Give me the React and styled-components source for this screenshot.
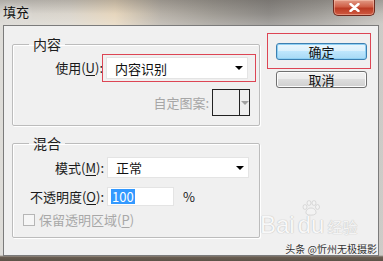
import styled, { createGlobalStyle } from "styled-components";

const GlobalStyle = createGlobalStyle`
  html, body {
    margin: 0;
    padding: 0;
  }
  body {
    font-family: "Noto Sans CJK SC", "Noto Sans", sans-serif;
    font-size: 13px;
    color: #1a1a1a;
    background: #8d8a84;
  }
`;

const Window = styled.div`
  width: 383px;
  height: 261px;
  display: flex;
  flex-direction: column;
  overflow: hidden;
  background:
    linear-gradient(180deg, rgba(0, 0, 0, 0) 0, rgba(0, 0, 0, 0) 255px, #6a5e52 257px, #5c5247 261px),
    linear-gradient(180deg, rgba(60, 55, 50, 0.25) 0, rgba(255, 255, 255, 0) 14px, rgba(255, 255, 255, 0.2) 24px),
    linear-gradient(90deg, #d6d4cf 0%, #dbd6cd 18%, #e6d6bd 30%, #b7b1a8 42%, #9f9b94 56%, #8e8b87 70%, #a29f9a 84%, #c2bfba 100%);
`;

const TitleBar = styled.div`
  height: 25px;
  flex: none;
  display: flex;
  justify-content: space-between;
  align-items: flex-start;
  padding-left: 3px;
`;

const Title = styled.span`
  font-size: 13px;
  line-height: 24px;
  color: #111;
  text-shadow: 0 0 6px rgba(255, 255, 255, 0.7);
`;

const CloseButton = styled.div`
  width: 42px;
  height: 16px;
  margin-right: 8px;
  box-sizing: border-box;
  border: 1px solid #6e2a1f;
  border-top: none;
  border-radius: 0 0 5px 5px;
  background: linear-gradient(180deg, #e29a86 0%, #cf5f47 45%, #bb3b24 55%, #cf5a41 100%);
  box-shadow: inset 0 0 0 1px rgba(255, 210, 190, 0.45);
  display: flex;
  align-items: center;
  justify-content: center;
`;

const Body = styled.div`
  position: relative;
  flex: 1;
  margin: 0 4px 5px 3px;
  display: flex;
  align-items: flex-start;
  padding: 9px 0 0 8px;
  background: #f0f0f0;
  border: 1px solid #7b7b7b;
`;

const LeftCol = styled.div`
  width: 248px;
  display: flex;
  flex-direction: column;
  gap: 8px;
`;

const Group = styled.fieldset`
  margin: 0;
  padding: ${(p) => p.$top}px 9px ${(p) => p.$bottom}px 0;
  min-width: 0;
  border: 1px solid #bcbcbc;
  border-radius: 2px;
  box-shadow: inset 1px 1px 0 #fff, 1px 1px 0 #fff;
`;

const Legend = styled.legend`
  margin-left: 16px;
  padding: 0 4px;
  font-size: 14px;
  line-height: 18px;
  color: #1e1e1e;
`;

const Row = styled.div`
  display: flex;
  align-items: center;
  justify-content: ${(p) => (p.$end ? "flex-end" : "flex-start")};
  margin-top: ${(p) => p.$gap || 0}px;
  padding-left: ${(p) => p.$indent || 0}px;
`;

const Label = styled.span`
  width: ${(p) => p.$w || 91}px;
  text-align: right;
  margin-right: 3px;
  white-space: nowrap;
  line-height: 18px;
  color: ${(p) => (p.$muted ? "#a6a6a6" : "#1a1a1a")};
`;

const Key = styled.u`
  text-underline-offset: 2px;
`;

const Marked = styled.div`
  position: relative;
  &::after {
    content: "";
    position: absolute;
    top: ${(p) => p.$t}px;
    bottom: ${(p) => p.$b}px;
    left: ${(p) => p.$l}px;
    right: ${(p) => p.$r}px;
    border: 1px solid #dd4554;
    pointer-events: none;
  }
`;

const Select = styled.div`
  width: 142px;
  height: ${(p) => p.$h}px;
  box-sizing: border-box;
  display: flex;
  align-items: center;
  justify-content: space-between;
  padding: 0 4px 0 8px;
  background: #fff;
  border: 1px solid #e4e4e4;
  font-size: 13px;
  color: #111;
`;

const Arrow = styled.span`
  width: 0;
  height: 0;
  border-left: 4px solid transparent;
  border-right: 4px solid transparent;
  border-top: 4px solid ${(p) => p.$color || "#000"};
`;

const PatternBox = styled.div`
  width: 38px;
  height: 27px;
  box-sizing: border-box;
  display: grid;
  grid-template-columns: 1fr 10px;
  border: 1px solid #222;
  background: #eeeeee;
`;

const PatternArrow = styled.div`
  border-left: 1px solid #222;
  display: flex;
  align-items: center;
  justify-content: center;
`;

const TextInput = styled.div`
  width: 67px;
  height: 19px;
  box-sizing: border-box;
  display: flex;
  align-items: center;
  padding-left: 3px;
  background: #fff;
  border: 1px solid #e4e4e4;
`;

const Selection = styled.span`
  background: #3399ff;
  color: #fff;
  padding: 0 1px;
  line-height: 15px;
`;

const Unit = styled.span`
  margin-left: 9px;
`;

const CheckBox = styled.span`
  width: 12px;
  height: 12px;
  box-sizing: border-box;
  border: 1px solid #b6b6b6;
  background: #f6f6f6;
  margin-right: 4px;
`;

const Muted = styled.span`
  color: #a8a8a8;
  line-height: 14px;
`;

const RightCol = styled.div`
  margin-left: 16px;
  padding-top: 8px;
  display: flex;
  flex-direction: column;
  gap: 11px;
`;

const Button = styled.div`
  width: 91px;
  height: 17px;
  box-sizing: border-box;
  border-radius: 3px;
  display: flex;
  align-items: center;
  justify-content: center;
  font-size: 13px;
  color: #111;
  border: 1px solid ${(p) => (p.$primary ? "#3c7fb1" : "#707070")};
  background: ${(p) =>
    p.$primary
      ? "linear-gradient(180deg, #eaf6fd 0%, #d9f0fc 50%, #bee6fd 50%, #a7d9f5 100%)"
      : "linear-gradient(180deg, #f2f2f2 0%, #ebebeb 50%, #dddddd 50%, #cfcfcf 100%)"};
  box-shadow: inset 0 0 0 1px ${(p) => (p.$primary ? "#8fd0f3" : "#fcfcfc")};
`;

const BaiduMark = styled.div`
  position: absolute;
  left: 256px;
  top: 187px;
  display: flex;
  align-items: flex-end;
  gap: 3px;
  opacity: 0.8;
  pointer-events: none;
`;

const BaiduWord = styled.span`
  font-family: "Liberation Sans", Arial, sans-serif;
  font-size: 24px;
  line-height: 24px;
  color: #fafafa;
  text-shadow: 0 0 1px #b5b5b5, 0 0 1px #b5b5b5;
`;

const Paw = styled.span`
  position: relative;
  display: inline-block;
`;

const PawIcon = styled.svg`
  position: absolute;
  left: 3px;
  top: -13px;
`;

const JingYan = styled.span`
  font-size: 15px;
  line-height: 20px;
  color: #f6f6f6;
  text-shadow: 0 0 1px #bdbdbd, 0 0 1px #bdbdbd;
`;

const Credit = styled.div`
  position: absolute;
  right: 1px;
  bottom: 0;
  font-size: 10px;
  line-height: 12px;
  color: #333;
  text-shadow: 0 0 2px #fff;
  white-space: nowrap;
`;

export default function App() {
  return (
    <>
      <GlobalStyle />
      <Window>
        <TitleBar>
          <Title>填充</Title>
          <CloseButton>
            <svg width="11" height="9" viewBox="0 0 11 9">
              <path d="M1.5 1 L9.5 8 M9.5 1 L1.5 8" stroke="#fff" strokeWidth="2.4" strokeLinecap="round" />
            </svg>
          </CloseButton>
        </TitleBar>
        <Body>
          <LeftCol>
            <Group $top={4} $bottom={9}>
              <Legend>内容</Legend>
              <Row>
                <Label $w={90}>
                  使用(<Key>U</Key>):
                </Label>
                <Marked $t={-3} $b={-3} $l={-4} $r={-8}>
                  <Select $h={22}>
                    内容识别
                    <Arrow />
                  </Select>
                </Marked>
              </Row>
              <Row $end $gap={10}>
                <Label $muted $w={80}>
                  自定图案:
                </Label>
                <PatternBox>
                  <span />
                  <PatternArrow>
                    <Arrow $color="#a0a0a0" />
                  </PatternArrow>
                </PatternBox>
              </Row>
            </Group>
            <Group $top={5} $bottom={10}>
              <Legend>混合</Legend>
              <Row>
                <Label>
                  模式(<Key>M</Key>):
                </Label>
                <Select $h={21}>
                  正常
                  <Arrow />
                </Select>
              </Row>
              <Row $gap={9}>
                <Label>
                  不透明度(<Key>O</Key>):
                </Label>
                <TextInput>
                  <Selection>100</Selection>
                </TextInput>
                <Unit>%</Unit>
              </Row>
              <Row $gap={7} $indent={10}>
                <CheckBox />
                <Muted>
                  保留透明区域(<Key>P</Key>)
                </Muted>
              </Row>
            </Group>
          </LeftCol>
          <RightCol>
            <Marked $t={-10} $b={-9} $l={-9} $r={-4}>
              <Button $primary>确定</Button>
            </Marked>
            <Button>取消</Button>
          </RightCol>
          <BaiduMark>
            <BaiduWord>Bai</BaiduWord>
            <Paw>
              <PawIcon width="20" height="16" viewBox="0 0 20 16">
                <g fill="#f4f4f4" stroke="#bdbdbd" strokeWidth="0.6">
                  <ellipse cx="4" cy="7" rx="2" ry="2.4" />
                  <ellipse cx="8" cy="3" rx="2" ry="2.4" />
                  <ellipse cx="13" cy="3" rx="2" ry="2.4" />
                  <ellipse cx="16.5" cy="7" rx="2" ry="2.4" />
                  <path d="M10 8 C6 8 4 12 5.5 14 C7 15.5 13 15.5 14.5 14 C16 12 14 8 10 8 Z" />
                </g>
              </PawIcon>
              <BaiduWord>du</BaiduWord>
            </Paw>
            <JingYan>经验</JingYan>
          </BaiduMark>
          <Credit>头条 @忻州无极摄影</Credit>
        </Body>
      </Window>
    </>
  );
}
